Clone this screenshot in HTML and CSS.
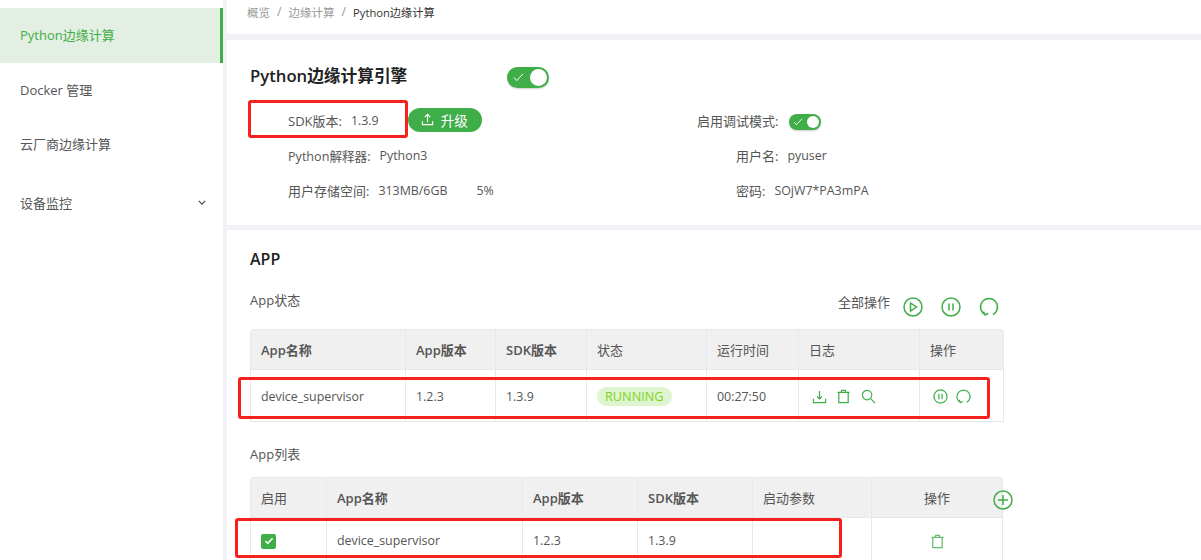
FILE: index.html
```html
<!DOCTYPE html>
<html lang="zh-CN">
<head>
    <meta charset="UTF-8">
    <title>Python边缘计算</title>
    <link rel="stylesheet" href="styles.css">
</head>
<body>

<!-- Sidebar -->
<aside class="sidebar">
    <div class="menu-item active">Python边缘计算</div>
    <div class="menu-item">Docker 管理</div>
    <div class="menu-item">云厂商边缘计算</div>
    <div class="menu-item submenu">
        <span>设备监控</span>
        <svg class="chevron" viewBox="0 0 10 6" width="8" height="5"><path d="M1 1l4 4 4-4" fill="none" stroke="#444" stroke-width="1.4"/></svg>
    </div>
</aside>

<main class="main">
    <!-- Breadcrumb -->
    <div class="breadcrumb">
        <span class="crumb">概览</span><span class="sep">/</span>
        <span class="crumb">边缘计算</span><span class="sep">/</span>
        <span class="crumb-current">Python边缘计算</span>
    </div>

    <!-- Engine card -->
    <section class="card engine-card">
        <div class="engine-title">
            <h2>Python边缘计算引擎</h2>
            <span class="switch switch-lg">
                <svg viewBox="0 0 12 10" width="11" height="9"><path d="M1 5l3 3.500 7-7.500" fill="none" stroke="#fff" stroke-width="1.100"/></svg>
                <i class="knob"></i>
            </span>
        </div>
        <div class="info-grid">
            <div class="info-row first">
                <span>SDK版本:</span><span class="value">1.3.9</span>
                <button class="upgrade-btn">
                    <svg viewBox="0 0 14 14" width="13" height="13"><path d="M7 10V2M4 4.500L7 1.500l3 3M1.500 9v3.500h11V9" fill="none" stroke="#fff" stroke-width="1.200"/></svg>
                    升级
                </button>
            </div>
            <div class="info-row first right debug">
                <span>启用调试模式:</span>
                <span class="switch switch-sm">
                    <svg viewBox="0 0 12 10" width="10" height="8"><path d="M1 5l3 3.500 7-7.500" fill="none" stroke="#fff" stroke-width="1.100"/></svg>
                    <i class="knob"></i>
                </span>
            </div>
            <div class="info-row">
                <span class="mixed">Python解释器:</span><span class="value">Python3</span>
            </div>
            <div class="info-row right">
                <span>用户名:</span><span class="value">pyuser</span>
            </div>
            <div class="info-row">
                <span>用户存储空间:</span><span class="value">313MB/6GB</span><span class="percent">5%</span>
            </div>
            <div class="info-row right">
                <span>密码:</span><span class="value">SOjW7*PA3mPA</span>
            </div>
        </div>
    </section>

    <!-- App card -->
    <section class="card app-card">
        <h2 class="app-title">APP</h2>

        <div class="status-bar">
            <span class="sub-title">App状态</span>
            <div class="all-actions">
                <span class="all-label">全部操作</span>
                <svg class="icon-big" viewBox="0 0 20 20"><circle cx="10" cy="10" r="9"/><path d="M7.500 6l6 4-6 4z"/></svg>
                <svg class="icon-big" viewBox="0 0 20 20"><circle cx="10" cy="10" r="9"/><path d="M8 6.500v7M12 6.500v7"/></svg>
                <svg class="icon-big" viewBox="0 0 20 20"><path d="M6 17.500A8.500 8.500 0 1 1 14 17.500M4.500 14.500L6.200 18l3-1.500"/></svg>
            </div>
        </div>

        <table class="app-table status-table">
            <colgroup>
                <col class="c-155"><col class="c-90"><col class="c-91"><col class="c-120"><col class="c-92"><col class="c-121"><col class="c-84">
            </colgroup>
            <thead>
                <tr>
                    <th class="strong">App名称</th>
                    <th class="strong">App版本</th>
                    <th class="strong">SDK版本</th>
                    <th>状态</th>
                    <th>运行时间</th>
                    <th>日志</th>
                    <th>操作</th>
                </tr>
            </thead>
            <tbody>
                <tr>
                    <td>device_supervisor</td>
                    <td>1.2.3</td>
                    <td>1.3.9</td>
                    <td><span class="tag">RUNNING</span></td>
                    <td>00:27:50</td>
                    <td>
                        <div class="icon-row log-icons">
                            <svg class="icon" viewBox="0 0 16 16"><path d="M8 2v8.500M5.500 8L8 10.500 10.500 8M1.500 10.500v4h13v-4"/></svg>
                            <svg class="icon" viewBox="0 0 16 16"><path d="M1.500 3.500h13M5.500 3.500l.5-2h4l.5 2M3 3.500v11h10v-11"/></svg>
                            <svg class="icon icon-search" viewBox="0 0 16 16"><circle cx="6.500" cy="6.500" r="5"/><path d="M10 10l5 5"/></svg>
                        </div>
                    </td>
                    <td>
                        <div class="icon-row action-icons">
                            <svg class="icon" viewBox="0 0 16 16"><circle cx="8" cy="8" r="7"/><path d="M6.300 5v6M9.700 5v6"/></svg>
                            <svg class="icon" viewBox="0 0 16 16"><path d="M4.500 14.200a7 7 0 1 1 7 0M3.300 11.800L4.700 14.500l2.500-1"/></svg>
                        </div>
                    </td>
                </tr>
            </tbody>
        </table>

        <div class="sub-title list-title">App列表</div>

        <div class="list-wrap">
            <table class="app-table list-table">
                <colgroup>
                    <col class="c-76"><col class="c-196"><col class="c-115"><col class="c-115"><col class="c-119"><col class="c-131">
                </colgroup>
                <thead>
                    <tr>
                        <th>启用</th>
                        <th class="strong">App名称</th>
                        <th class="strong">App版本</th>
                        <th class="strong">SDK版本</th>
                        <th>启动参数</th>
                        <th class="center">操作</th>
                    </tr>
                </thead>
                <tbody>
                    <tr>
                        <td>
                            <span class="checkbox">
                                <svg viewBox="0 0 12 10" width="10" height="8"><path d="M1.500 5l3 3 6-6.500" fill="none" stroke="#fff" stroke-width="2"/></svg>
                            </span>
                        </td>
                        <td>device_supervisor</td>
                        <td>1.2.3</td>
                        <td>1.3.9</td>
                        <td></td>
                        <td class="center">
                            <svg class="icon icon-light" viewBox="0 0 16 16"><path d="M1.500 3.500h13M5.500 3.500l.5-2h4l.5 2M3 3.500v11h10v-11"/></svg>
                        </td>
                    </tr>
                </tbody>
            </table>
            <svg class="add-btn" viewBox="0 0 20 20"><circle cx="10" cy="10" r="9"/><path d="M10 5v10M5 10h10"/></svg>
        </div>
    </section>
</main>

<!-- Red annotation boxes drawn over the screenshot -->
<div class="mark mark-sdk"></div>
<div class="mark mark-status"></div>
<div class="mark mark-list"></div>

</body>
</html>
```

FILE: styles.css
```css
/* Page */
html, body {
    margin: 0;
    height: 560px;
    overflow: hidden;
}

body {
    display: flex;
    background: #f0f2f5;
    color: #555;
    font-family: 'Open Sans', 'Noto Sans CJK SC', sans-serif;
    font-size: 12.4px;
}

/* Sidebar */
.sidebar {
    width: 223px;
    height: 560px;
    margin-right: 4px;
    padding-top: 8px;
    box-sizing: border-box;
    background: #fff;
    flex-shrink: 0;
}

.menu-item {
    display: flex;
    align-items: center;
    justify-content: space-between;
    height: 54.5px;
    padding: 0 17px 2px 20px;
    box-sizing: border-box;
    font-size: 13px;
    color: #555;
}

.menu-item.active {
    height: 55px;
    background: #e3efe2;
    border-right: 3px solid #3fae49;
    color: #3fae49;
}

.menu-item.submenu {
    height: 63px;
}

/* Main column */
.main {
    flex: 1;
    min-width: 0;
}

.breadcrumb {
    display: flex;
    align-items: center;
    height: 34px;
    margin-bottom: 6px;
    padding: 0 0 11px 20px;
    box-sizing: border-box;
    background: #fff;
    color: #333;
}

.crumb {
    font-size: 11.5px;
    color: #999;
}

.crumb-current {
    font-size: 11.2px;
}

.sep {
    margin: 0 7px;
    color: #999;
}

.card {
    background: #fff;
    padding-left: 23px;
}

/* Engine card */
.engine-card {
    height: 185px;
    margin-bottom: 5px;
    box-sizing: border-box;
}

.engine-title {
    display: flex;
    align-items: center;
    height: 28px;
    padding-top: 23px;
}

.engine-title h2 {
    width: 257px;
    margin: 0 0 5px;
    font-size: 16.7px;
    font-weight: 600;
    color: #222;
}

.switch {
    position: relative;
    display: inline-flex;
    align-items: center;
    background: #3fae49;
    box-shadow: 0 1px 2px rgba(0, 0, 0, 0.2);
}

.switch-lg {
    width: 42px;
    height: 21px;
    border-radius: 11px;
    padding-left: 6px;
    box-sizing: border-box;
}

.switch-sm {
    width: 32px;
    height: 16px;
    border-radius: 8px;
    padding-left: 4px;
    box-sizing: border-box;
    margin: 2px 0 0 11px;
}

.knob {
    position: absolute;
    right: 2px;
    top: 2px;
    background: #fff;
    border-radius: 50%;
}

.switch-lg .knob {
    width: 17px;
    height: 17px;
}

.switch-sm .knob {
    width: 12px;
    height: 12px;
}

.info-grid {
    display: grid;
    grid-template-columns: 447px 1fr;
    grid-auto-rows: 35px;
    padding: 12px 0 0 38px;
    font-size: 12.4px;
    color: #555;
}

.info-row {
    display: flex;
    align-items: center;
}

.info-row > span:first-child {
    font-size: 13px;
}

.info-row > span.mixed {
    font-size: 12.6px;
}

.info-row.first {
    height: 35px;
}

.info-row.right {
    padding-left: 1px;
}

.info-row.debug {
    margin-left: -39px;
}

.value {
    margin-left: 9px;
}

.percent {
    margin-left: 29px;
}

.upgrade-btn {
    display: inline-flex;
    align-items: center;
    gap: 7px;
    height: 24px;
    margin: -2px 0 0 29px;
    padding: 0 14px 0 13px;
    border: none;
    border-radius: 12px;
    background: #3fae49;
    color: #fff;
    font-family: inherit;
    font-size: 13.5px;
}

/* App card */
.app-card {
    height: 330px;
}

.app-title {
    margin: 0;
    padding-top: 18px;
    font-size: 16px;
    font-weight: 600;
    line-height: 22px;
    color: #222;
}

.status-bar {
    display: flex;
    justify-content: space-between;
    width: 749px;
    height: 40px;
    padding-top: 19px;
}

.sub-title {
    font-size: 13px;
    line-height: 22px;
    color: #555;
}

.all-actions {
    display: flex;
    align-items: flex-start;
    gap: 18px;
    line-height: 17px;
    padding-top: 8px;
}

.all-label {
    margin: -3px -5px 0 0;
    font-size: 13px;
}

.icon-big {
    width: 20px;
    height: 20px;
    fill: none;
    stroke: #3fae49;
    stroke-width: 1.5;
}

/* Tables */
.app-table {
    border-collapse: separate;
    border-spacing: 0;
    table-layout: fixed;
    border-top: 1px solid #e8e8e8;
    border-left: 1px solid #e8e8e8;
    border-radius: 4px 4px 0 0;
}

.app-table th, .app-table td {
    padding: 0 10px;
    text-align: left;
    border-right: 1px solid #e8e8e8;
    border-bottom: 1px solid #e8e8e8;
    color: #555;
}

.app-table th {
    height: 40px;
    background: #f0f0f0;
    font-size: 13px;
    font-weight: 400;
    box-sizing: border-box;
}

.app-table th.strong {
    font-weight: 600;
}

.app-table .center {
    text-align: center;
}

.status-table {
    width: 753px;
}

.status-table td {
    height: 50px;
    padding-top: 1px;
}

.list-table {
    width: 752px;
}

.list-table td {
    height: 44px;
}

.c-155 { width: 155px; }
.c-90 { width: 90px; }
.c-91 { width: 91px; }
.c-120 { width: 120px; }
.c-92 { width: 92px; }
.c-121 { width: 121px; }
.c-84 { width: 84px; }
.c-76 { width: 76px; }
.c-196 { width: 196px; }
.c-115 { width: 115px; }
.c-119 { width: 119px; }
.c-131 { width: 131px; }

.tag {
    display: inline-block;
    padding: 0 8px;
    border-radius: 10px;
    background: #dff5cf;
    color: #7ed321;
    font-size: 12.7px;
    line-height: 19px;
}

.icon-row {
    display: flex;
    align-items: center;
}

.log-icons {
    gap: 9px;
    padding-left: 3px;
}

.icon-search {
    margin-left: 1px;
}

.action-icons {
    gap: 8px;
    padding-left: 3px;
}

.icon {
    width: 15px;
    height: 15px;
    fill: none;
    stroke: #3fae49;
    stroke-width: 1.300;
    vertical-align: middle;
}

.icon-light {
    stroke: #62bd6a;
}

.list-title {
    margin-top: 21px;
    margin-bottom: 12px;
}

.list-wrap {
    position: relative;
    width: 780px;
}

.add-btn {
    position: absolute;
    left: 743px;
    top: 13px;
    width: 20px;
    height: 20px;
    fill: none;
    stroke: #3fae49;
    stroke-width: 1.500;
}

.checkbox {
    display: inline-flex;
    align-items: center;
    justify-content: center;
    width: 15px;
    height: 15px;
    border-radius: 2px;
    background: #3fae49;
    vertical-align: middle;
}

/* Red annotation boxes */
.mark {
    position: absolute;
    border: 3px solid #f6211c;
    border-radius: 3px;
    box-sizing: border-box;
}

.mark-sdk {
    left: 248px;
    top: 100px;
    width: 160px;
    height: 38px;
}

.mark-status {
    left: 238px;
    top: 377px;
    width: 752px;
    height: 42px;
}

.mark-list {
    left: 235px;
    top: 518px;
    width: 607px;
    height: 40px;
}
```
